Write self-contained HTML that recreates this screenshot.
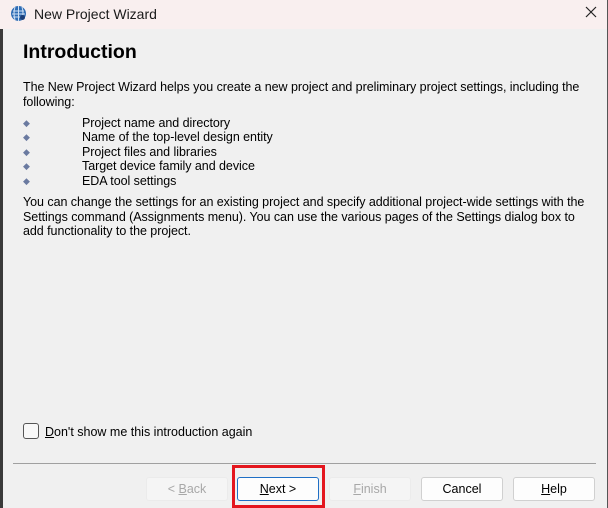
<!DOCTYPE html>
<html><head><style>
*{margin:0;padding:0;box-sizing:border-box}
body{width:608px;height:508px;overflow:hidden;background:#f0f0f0;font-family:"Liberation Sans",sans-serif;font-size:12.5px;color:#000;position:relative}
.title{position:absolute;left:0;top:0;width:608px;height:29px;background:#f9efef}
.title span{position:absolute;left:34px;top:6px;font-size:14px;color:#1a1a1a}
.lb{position:absolute;left:0;top:29px;width:3px;height:479px;background:#3a3a3a}
.rb{position:absolute;right:0;top:0;width:1px;height:508px;background:#555}
h1{position:absolute;left:23px;top:41px;font-size:19.5px;font-weight:bold}
.t{position:absolute;left:23px;line-height:14.5px;width:575px;letter-spacing:-0.05px}
.b{position:absolute;left:23px;font-size:9px;color:#6a7aa0}
.bi{position:absolute;left:82px;letter-spacing:-0.05px}
.hr{position:absolute;left:13px;top:463px;width:583px;height:1px;background:#a0a0a0}
.btn{position:absolute;top:477px;height:24px;width:82px;background:#fdfdfd;border:1px solid #d0d0d0;border-radius:3px;text-align:center;line-height:22px}
.dis{background:#f5f5f5;border-color:#ebebeb;color:#a8a8a8}
</style></head><body>
<div class="title">
<svg style="position:absolute;left:10px;top:5px" width="17" height="17" viewBox="0 0 17 17"><circle cx="8.5" cy="8.5" r="7.5" fill="#2f6db5"/><path d="M3 6h11M2 9h13M3 12h11M8.5 1v15M5 2q-2 6 0 13M12 2q2 6 0 13" stroke="#cfe0f4" stroke-width="1" fill="none"/><circle cx="12.5" cy="12.5" r="2.5" fill="#1b3e78"/></svg>
<span>New Project Wizard</span>
<svg style="position:absolute;left:585px;top:6px" width="12" height="12"><path d="M1 1L11 11M11 1L1 11" stroke="#222" stroke-width="1.2"/></svg>
</div>
<div class="lb"></div><div class="rb"></div>
<h1>Introduction</h1>
<div class="t" style="top:80px">The New Project Wizard helps you create a new project and preliminary project settings, including the following:</div>
<div class="b" style="top:118px">◆</div><div class="bi" style="top:116px">Project name and directory</div>
<div class="b" style="top:132px">◆</div><div class="bi" style="top:130px">Name of the top-level design entity</div>
<div class="b" style="top:147px">◆</div><div class="bi" style="top:145px">Project files and libraries</div>
<div class="b" style="top:161px">◆</div><div class="bi" style="top:159px">Target device family and device</div>
<div class="b" style="top:176px">◆</div><div class="bi" style="top:174px">EDA tool settings</div>
<div class="t" style="top:195px">You can change the settings for an existing project and specify additional project-wide settings with the Settings command (Assignments menu). You can use the various pages of the Settings dialog box to add functionality to the project.</div>
<div style="position:absolute;left:23px;top:423px;width:16px;height:16px;border:1px solid #555;border-radius:3px;background:#f8f8f8"></div>
<div style="position:absolute;left:45px;top:425px"><u>D</u>on't show me this introduction again</div>
<div class="hr"></div>
<div class="btn dis" style="left:146px">&lt; <u>B</u>ack</div>
<div class="btn" style="left:237px;border-color:#1f6fc5"><u>N</u>ext &gt;</div>
<div style="position:absolute;left:232px;top:465px;width:93px;height:43px;border:3px solid #e4161e"></div>
<div class="btn dis" style="left:329px"><u>F</u>inish</div>
<div class="btn" style="left:421px">Cancel</div>
<div class="btn" style="left:513px"><u>H</u>elp</div>
</body></html>
